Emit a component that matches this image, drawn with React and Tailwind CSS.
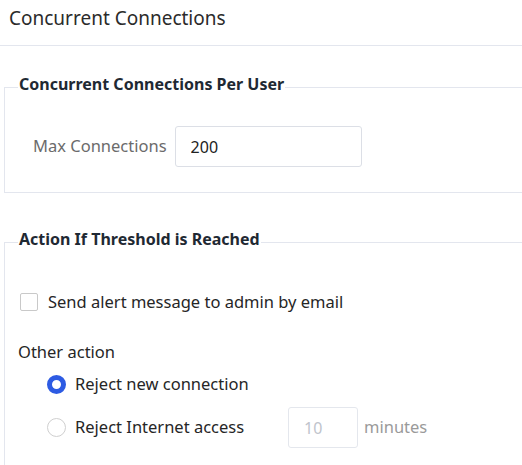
import React, { useState } from "react";

export default function App() {
  const [maxConn, setMaxConn] = useState("200");
  const [alertMail, setAlertMail] = useState(false);
  const [action, setAction] = useState("reject-conn"); // reject-conn, reject-net

  return (
    <div className="w-[522px] h-[465px] overflow-hidden bg-white font-['Noto_Sans',sans-serif] text-[#262626]">
      <div className="h-[46px] border-b border-[#e3e6ee] pl-[9px] pt-[5px] text-[19px] leading-[26px] text-[#2b2b2b]">
        Concurrent Connections
      </div>

      <fieldset className="w-[560px] ml-[4px] mt-[28px] border-l border-y border-[#e3e6ee] pl-[13px] pb-[25px]">
        <legend className="px-[1px] pb-[6px] text-[16px] leading-[20px] font-bold text-[#1f2933]">
          Concurrent Connections Per User
        </legend>
        <div className="flex items-center mt-[26px] pl-[15px]">
          <label className="text-[16.5px] text-[#6b6b6b]">Max Connections</label>
          <input
            type="text"
            value={maxConn}
            onChange={(e) => setMaxConn(e.target.value.replace(/\D/g, ""))}
            className="ml-[8px] w-[187px] h-[41px] border border-[#dcdfe6] rounded-[3px] px-[15px] text-[16px] text-[#222] outline-none"
          />
        </div>
      </fieldset>

      <fieldset className="w-[560px] ml-[4px] mt-[36px] border-l border-t border-[#e3e6ee] pl-[13px] pb-[20px]">
        <legend className="px-[1px] pb-[6px] text-[16px] leading-[20px] font-bold text-[#1f2933]">
          Action If Threshold is Reached
        </legend>

        <label className="flex items-center mt-[35px] ml-[2px] h-[24px] cursor-pointer">
          <span
            onClick={() => setAlertMail(!alertMail)}
            className={`w-[18px] h-[18px] rounded-[2px] border ${alertMail ? "border-[#2d5be3] bg-[#2d5be3]" : "border-[#c9c9c9] bg-white"}`}
          />
          <span className="ml-[10px] text-[16.5px]">Send alert message to admin by email</span>
        </label>

        <div className="mt-[26px] h-[24px] text-[16.5px] leading-[24px]">Other action</div>

        <div className="pl-[29px]">
          <label
            className="flex items-center mt-[8px] h-[24px] cursor-pointer"
            onClick={() => setAction("reject-conn")}
          >
            <span
              className={`w-[19px] h-[19px] rounded-full ${action === "reject-conn" ? "border-[5px] border-[#2d5be3]" : "border border-[#cfcfcf]"}`}
            />
            <span className="ml-[9px] text-[16.5px]">Reject new connection</span>
          </label>

          <div className="flex items-center mt-[11px]">
            <label
              className="flex items-center w-[241px] cursor-pointer"
              onClick={() => setAction("reject-net")}
            >
              <span
                className={`w-[19px] h-[19px] rounded-full ${action === "reject-net" ? "border-[5px] border-[#2d5be3]" : "border border-[#cfcfcf]"}`}
              />
              <span className="ml-[9px] text-[16.5px]">Reject Internet access</span>
            </label>
            <input
              type="text"
              disabled={action !== "reject-net"}
              defaultValue="10"
              className="w-[70px] h-[41px] border border-[#e4e7ed] rounded-[3px] px-[15px] text-[16px] text-[#c0c4cc] bg-white outline-none"
            />
            <span className="ml-[6px] text-[16.5px] text-[#9a9a9a]">minutes</span>
          </div>
        </div>
      </fieldset>
    </div>
  );
}
